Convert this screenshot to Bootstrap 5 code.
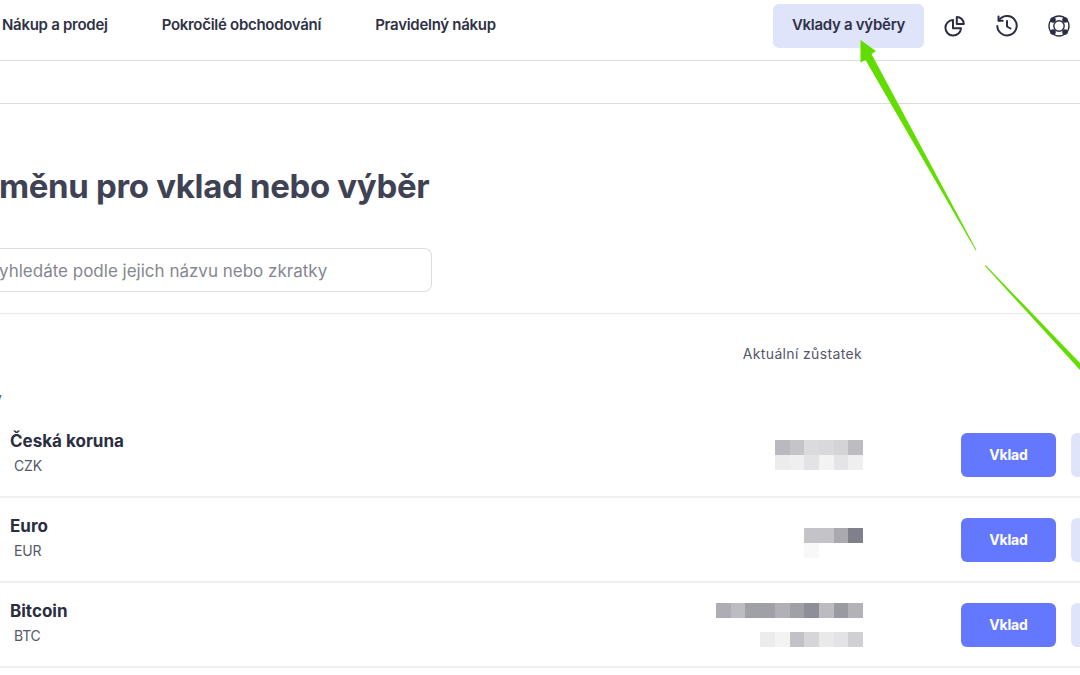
<!DOCTYPE html>
<html lang="cs">
<head>
<meta charset="utf-8">
<link href="https://cdn.jsdelivr.net/npm/bootstrap@5.3.0/dist/css/bootstrap.min.css" rel="stylesheet">
<style>
html,body{height:675px;overflow:hidden;background:#fff}
body{font-family:Inter,"Noto Sans",sans-serif;color:#2b2e42;position:relative;width:1080px}
.topbar{height:61px;border-bottom:1px solid #dcdcdf;padding:0 0 8px 2px}
.toplink{font-size:15px;font-weight:600;color:#2f3146;letter-spacing:-.28px;text-decoration:none;white-space:nowrap;padding-bottom:2px}
.topgap{gap:54px}
.activelink{background:#dfe4fb;border-radius:6px;width:151px;height:44px;margin-right:20px}
.topicons{gap:30px;padding-right:10px}
.subbar{height:43px;border-bottom:1px solid #dcdcdf}
.heading{font-size:33px;font-weight:700;color:#3f4254;letter-spacing:-.33px;line-height:40px;margin:62px 0 42px -1px;white-space:nowrap}
.searchbox{width:433px;height:44px;margin-left:-1px;padding-top:3px;border:1px solid #dcdde1;border-left:0;border-radius:0 8px 8px 0;color:#85878f;font-size:17px}
.rule{border-bottom:1px solid #e9e9ec;height:22px}
.colhead{width:862px;font-size:14px;letter-spacing:.35px;color:#55576a;margin-top:30px;line-height:20px}
.grouptick{height:30px;font-size:14px;color:#55576a;line-height:30px;margin-left:-6px;margin-top:19px}
.assetrow{height:85px;border-bottom:2px solid #f0f0f2}
.assetname{width:700px;flex:none;padding:0 0 2px 10px}
.assetname b{display:block;font-size:17px;font-weight:700;line-height:20px;color:#2b2e42}
.assetname span{display:block;font-size:14px;line-height:20px;color:#55576a;margin:5px 0 0 4px;letter-spacing:-.2px}
.balance{width:163px;flex:none}
.balance svg{display:block}
.balance .lowered{margin-top:6px}
.actions{width:119px;margin-left:98px;gap:15px;white-space:nowrap;flex:none;overflow:hidden}
.depositbtn{width:95px;height:44px;background:#6478ff;border:0;border-radius:6px;color:#fff;font-size:14px;font-weight:700;letter-spacing:-.2px;flex:none}
.withdrawbtn{width:95px;height:44px;background:#dfe4fb;border:0;border-radius:6px;flex:none}
.arrowlayer{position:absolute;left:0;top:0;pointer-events:none}
</style>
</head>
<body>
<nav class="topbar d-flex align-items-center justify-content-between">
  <div class="d-flex topgap">
    <a class="toplink" href="#">Nákup a prodej</a>
    <a class="toplink" href="#">Pokročilé obchodování</a>
    <a class="toplink" href="#">Pravidelný nákup</a>
  </div>
  <div class="d-flex align-items-center">
    <a class="toplink activelink d-flex align-items-center justify-content-center" href="#">Vklady a výběry</a>
    <div class="d-flex topicons">
      <svg width="22" height="22" viewBox="0 0 22 22" fill="none" stroke="#2b2e42" stroke-width="2" stroke-linejoin="round"><path d="M9 5a7.8 7.8 0 1 0 8 8.3H9z"/><path d="M12.8 2a7 7 0 0 1 7 7h-7z"/></svg>
      <svg width="22" height="22" viewBox="0 0 22 22" fill="none" stroke="#2b2e42" stroke-width="2" stroke-linecap="round" stroke-linejoin="round"><path d="M2.8 5.5A9.7 9.7 0 1 1 1.3 11"/><path d="M2.5 1.5v4.2h4.2"/><path d="M11 6v5.5l3.5 2"/></svg>
      <svg width="22" height="22" viewBox="0 0 22 22" fill="none" stroke="#2b2e42"><circle cx="11" cy="11" r="10" stroke-width="1.4"/><circle cx="11" cy="11" r="5.2" stroke-width="1.4"/><g fill="#2b2e42" stroke="none"><circle cx="5" cy="5" r="2.8"/><circle cx="17" cy="5" r="2.8"/><circle cx="5" cy="17" r="2.8"/><circle cx="17" cy="17" r="2.8"/></g></svg>
    </div>
  </div>
</nav>
<div class="subbar"></div>
<main>
  <h1 class="heading">měnu pro vklad nebo výběr</h1>
  <div class="searchbox d-flex align-items-center">yhledáte podle jejich názvu nebo zkratky</div>
  <div class="rule"></div>
  <div class="colhead text-end">Aktuální zůstatek</div>
  <div class="grouptick">y</div>

  <section class="assetrow d-flex align-items-center">
    <div class="assetname"><b>Česká koruna</b><span>CZK</span></div>
    <div class="balance d-flex justify-content-end">
      <svg width="88" height="30" viewBox="0 0 6 2" preserveAspectRatio="none" shape-rendering="crispEdges">
        <rect x="0" width="1" height="1" fill="#b9b9be"/><rect x="1" width="1" height="1" fill="#c5c5c9"/><rect x="2" width="1" height="1" fill="#dbdbdd"/><rect x="3" width="1" height="1" fill="#d9d9dc"/><rect x="4" width="1" height="1" fill="#d4d4d7"/><rect x="5" width="1" height="1" fill="#bcbcc1"/>
        <rect x="0" y="1" width="1" height="1" fill="#ececed"/><rect x="1" y="1" width="1" height="1" fill="#efeff0"/><rect x="2" y="1" width="1" height="1" fill="#e3e3e5"/><rect x="3" y="1" width="1" height="1" fill="#f3f3f3"/><rect x="4" y="1" width="1" height="1" fill="#e4e4e6"/><rect x="5" y="1" width="1" height="1" fill="#efefef"/>
      </svg>
    </div>
    <div class="actions d-flex"><button class="depositbtn">Vklad</button><button class="withdrawbtn" aria-label="Výběr"></button></div>
  </section>

  <section class="assetrow d-flex align-items-center">
    <div class="assetname"><b>Euro</b><span>EUR</span></div>
    <div class="balance d-flex justify-content-end">
      <svg class="lowered" width="59" height="30" viewBox="0 0 4 2" preserveAspectRatio="none" shape-rendering="crispEdges">
        <rect x="0" width="1" height="1" fill="#c4c4c8"/><rect x="1" width="1" height="1" fill="#c4c4c8"/><rect x="2" width="1" height="1" fill="#a9a9af"/><rect x="3" width="1" height="1" fill="#7f808c"/>
        <rect x="0" y="1" width="1" height="1" fill="#f8f8f8"/>
      </svg>
    </div>
    <div class="actions d-flex"><button class="depositbtn">Vklad</button><button class="withdrawbtn" aria-label="Výběr"></button></div>
  </section>

  <section class="assetrow d-flex align-items-center">
    <div class="assetname"><b>Bitcoin</b><span>BTC</span></div>
    <div class="balance d-flex justify-content-end">
      <svg width="147" height="44" viewBox="0 0 10 3" preserveAspectRatio="none" shape-rendering="crispEdges">
        <rect x="0" width="1" height="1" fill="#adadb3"/><rect x="1" width="1" height="1" fill="#bdbdc1"/><rect x="2" width="1" height="1" fill="#a0a0a7"/><rect x="3" width="1" height="1" fill="#a0a0a7"/><rect x="4" width="1" height="1" fill="#b0b0b5"/><rect x="5" width="1" height="1" fill="#a0a0a7"/><rect x="6" width="1" height="1" fill="#8e8e98"/><rect x="7" width="1" height="1" fill="#bcbcc0"/><rect x="8" width="1" height="1" fill="#9a9aa2"/><rect x="9" width="1" height="1" fill="#b2b2b7"/>
        <rect x="3" y="2" width="1" height="1" fill="#ececed"/><rect x="4" y="2" width="1" height="1" fill="#f3f3f3"/><rect x="5" y="2" width="1" height="1" fill="#c2c2c6"/><rect x="6" y="2" width="1" height="1" fill="#d6d6d9"/><rect x="7" y="2" width="1" height="1" fill="#e9e9ea"/><rect x="8" y="2" width="1" height="1" fill="#e3e3e5"/><rect x="9" y="2" width="1" height="1" fill="#d0d0d3"/>
      </svg>
    </div>
    <div class="actions d-flex"><button class="depositbtn">Vklad</button><button class="withdrawbtn" aria-label="Výběr"></button></div>
  </section>
</main>
<svg class="arrowlayer" width="1080" height="675" viewBox="0 0 1080 675" fill="#62dd00">
  <path d="M860.5 40L876 51L871.5 54L976.5 250L975.8 250.4L865.5 60L860.5 62.5Z"/>
  <path d="M985 266L985.8 265.2L1080 363V370Z"/>
</svg>
</body>
</html>
